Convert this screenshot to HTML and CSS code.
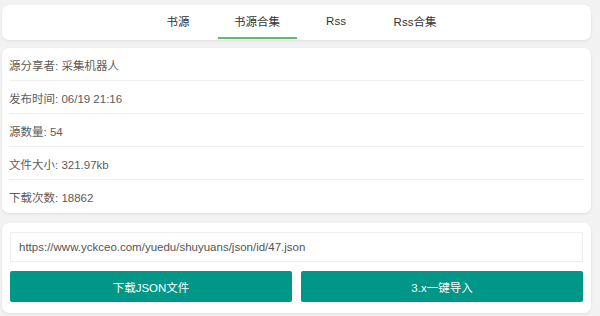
FILE: index.html
```html
<!DOCTYPE html>
<html lang="zh">
<head>
<meta charset="utf-8">
<link rel="stylesheet" href="styles.css">
</head>
<body>
<div class="page">
  <div class="card tabs">
    <div class="tab">书源</div>
    <div class="tab active">书源合集</div>
    <div class="tab">Rss</div>
    <div class="tab">Rss合集</div>
  </div>
  <div class="card info">
    <div class="row">源分享者: 采集机器人</div>
    <div class="row">发布时间: 06/19 21:16</div>
    <div class="row">源数量: 54</div>
    <div class="row">文件大小: 321.97kb</div>
    <div class="row">下载次数: 18862</div>
  </div>
  <div class="card actions">
    <div class="url">https://www.yckceo.com/yuedu/shuyuans/json/id/47.json</div>
    <div class="buttons">
      <div class="btn">下载JSON文件</div>
      <div class="btn">3.x一键导入</div>
    </div>
  </div>
</div>
</body>
</html>
```
FILE: styles.css
```css
* { box-sizing: border-box; }
html, body { margin: 0; padding: 0; }
body {
  background: #f2f2f2;
  font-family: "Liberation Sans", Arial, "Noto Sans CJK SC", sans-serif;
  font-size: 11.5px;
  color: #5c5c5c;
  width: 600px;
  height: 316px;
  overflow: hidden;
}
.page {
  padding: 5px 9px 0 2px;
  display: flex;
  flex-direction: column;
}
.card {
  background: #fff;
  border-radius: 7px;
  box-shadow: 0 1px 3px rgba(0,0,0,0.08);
}
.tabs {
  height: 35px;
  display: flex;
  justify-content: center;
}
.tab {
  width: 79px;
  display: flex;
  align-items: center;
  justify-content: center;
  color: #333;
  font-size: 11.5px;
  padding-bottom: 1px;
  border-bottom: 2px solid transparent;
  margin-bottom: 1px;
}
.tab.active {
  border-bottom-color: #5cbd6c;
}
.info {
  margin-top: 8px;
  padding: 0 7px;
}
.row {
  height: 33px;
  display: flex;
  align-items: center;
  border-bottom: 1px solid #eeeeee;
  padding-top: 1px;
}
.row:last-child { border-bottom: none; }
.actions {
  margin-top: 10px;
  padding: 9px 8px 11px;
  display: flex;
  flex-direction: column;
  gap: 9px;
}
.url {
  height: 30px;
  border: 1px solid #eee;
  display: flex;
  align-items: center;
  padding-left: 8px;
  color: #555;
}
.buttons {
  display: flex;
  gap: 9px;
}
.btn {
  flex: 1;
  height: 31px;
  background: #009688;
  color: #fff;
  border-radius: 2px;
  display: flex;
  align-items: center;
  justify-content: center;
}
```
